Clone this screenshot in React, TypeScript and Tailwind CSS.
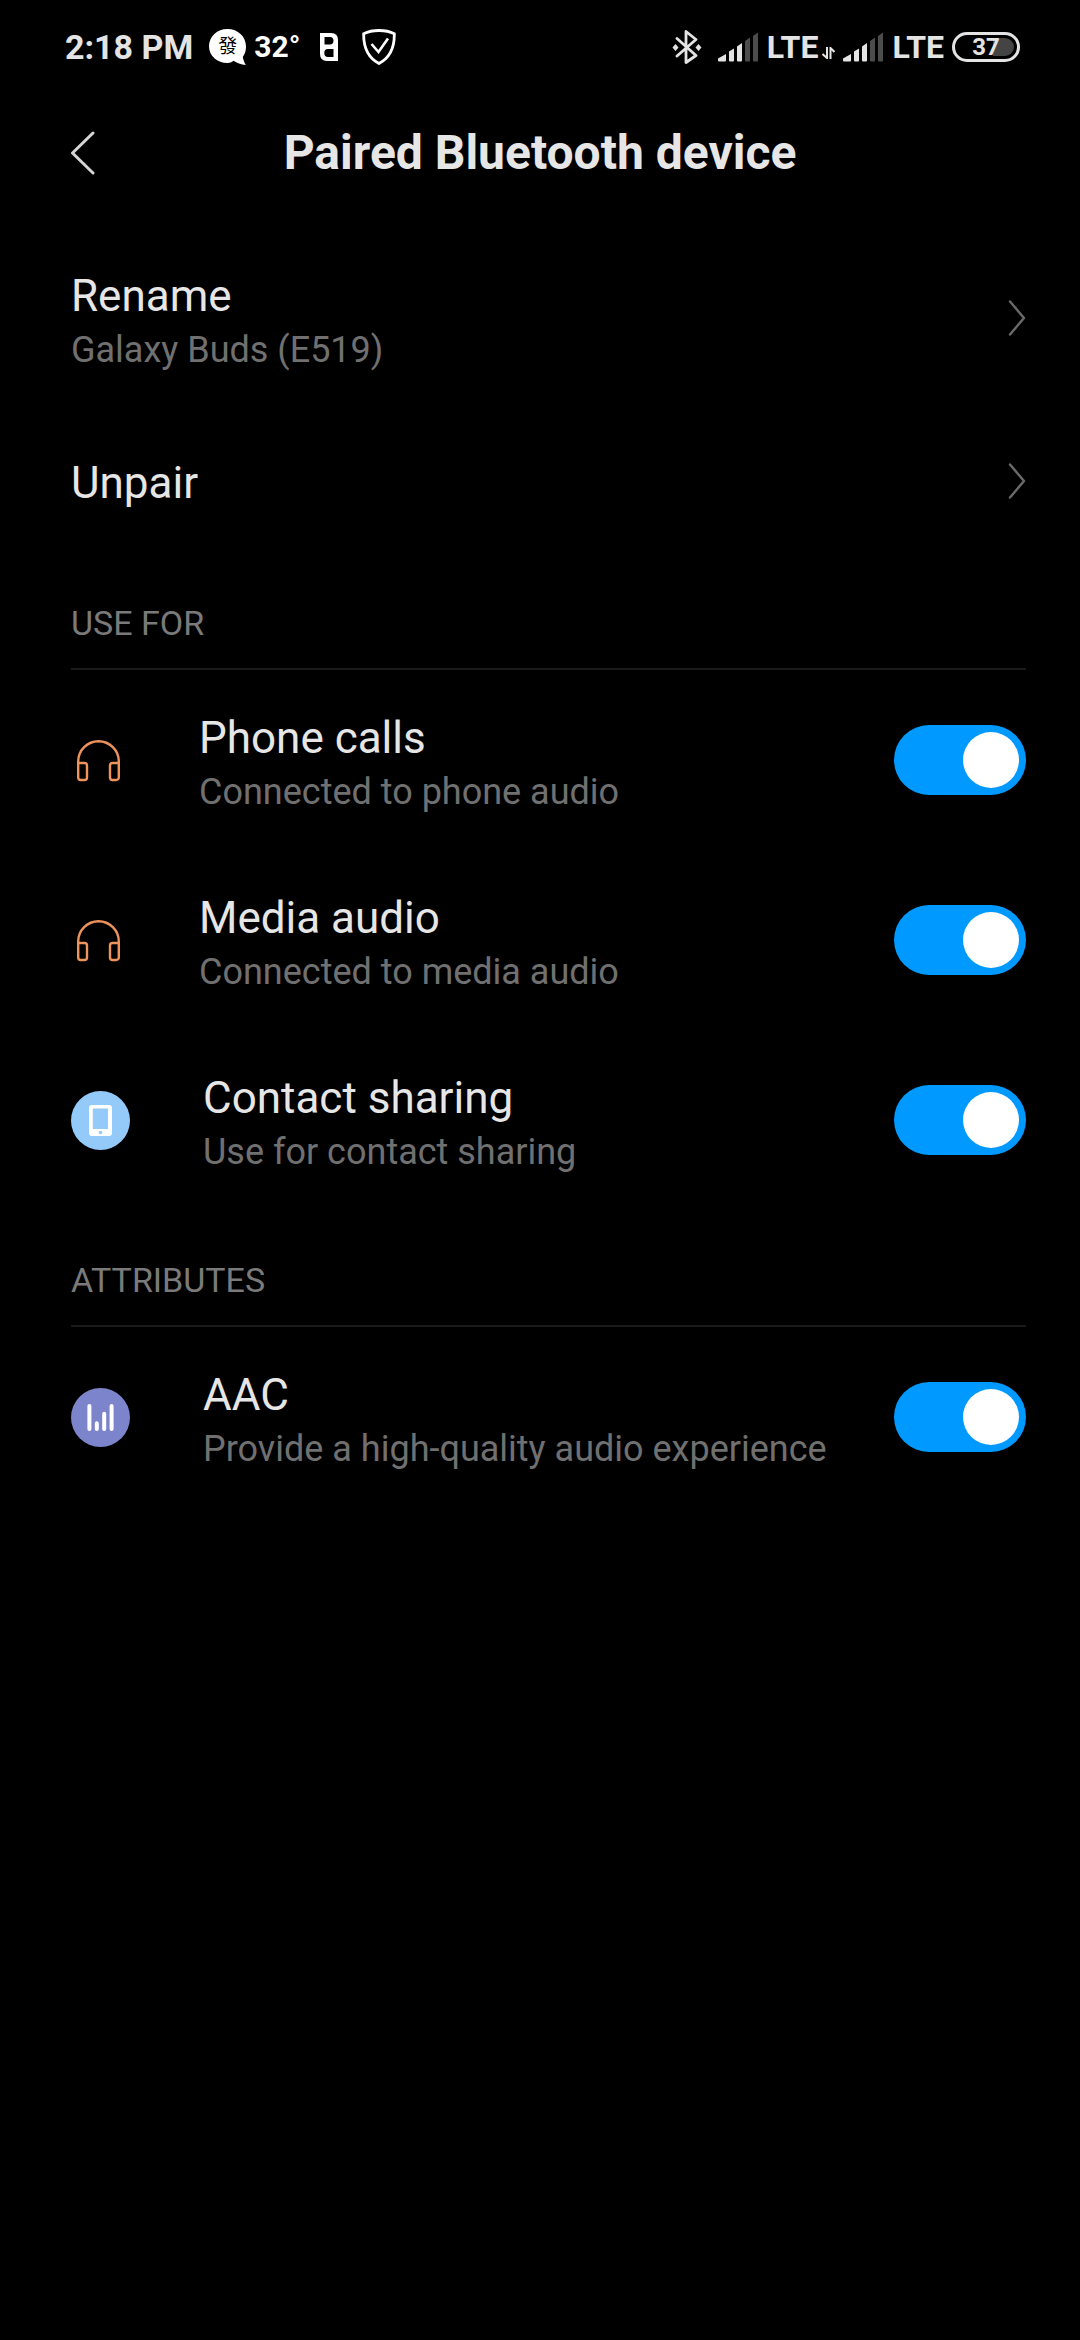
import type { ReactNode } from "react";

function ChevronRight() {
  return (
    <svg width="18" height="36" viewBox="0 0 18 36" fill="none" className="shrink-0" aria-hidden="true">
      <path d="M2 1.5L16 18L2 34.5" stroke="#6a6a6a" strokeWidth="2.4" strokeLinecap="round" strokeLinejoin="round" />
    </svg>
  );
}

function HeadphonesIcon() {
  return (
    <svg width="55" height="60" viewBox="0 0 55 60" fill="none" stroke="#ef935c" strokeWidth="2.4" className="shrink-0" aria-hidden="true">
      <path d="M7.2 33V31.5a20.3 20.3 0 0 1 40.6 0V33" />
      <path d="M7.2 33h6.3a2.5 2.500 0 0 1 2.500 2.500v12a2.500 2.500 0 0 1-2.500 2.500H9.700a2.500 2.500 0 0 1-2.500-2.500z" />
      <path d="M47.800 33h-6.300a2.500 2.500 0 0 0-2.500 2.500v12a2.500 2.500 0 0 0 2.500 2.500h3.800a2.500 2.500 0 0 0 2.500-2.500z" />
    </svg>
  );
}

function ContactIcon() {
  return (
    <svg width="59" height="59" viewBox="0 0 59 59" className="shrink-0" aria-hidden="true">
      <circle cx="29.5" cy="29.5" r="29.5" fill="#93cafa" />
      <rect x="18" y="14" width="23" height="31" rx="3" fill="#fff" />
      <rect x="21.8" y="17.5" width="15.2" height="20.5" fill="#93cafa" />
      <circle cx="29.5" cy="41.5" r="1.8" fill="#93cafa" />
    </svg>
  );
}

function EqualizerIcon() {
  return (
    <svg width="59" height="59" viewBox="0 0 59 59" className="shrink-0" aria-hidden="true">
      <circle cx="29.5" cy="29.5" r="29.5" fill="#7c84cb" />
      <g stroke="#fff" strokeWidth="4" strokeLinecap="round">
        <path d="M18.4 18v23M25.8 35.2V41M33.2 25.8V41M40.6 18v23" />
      </g>
    </svg>
  );
}

function SignalIcon() {
  return (
    <svg width="41" height="30" viewBox="0 0 41 30" aria-hidden="true">
      <g fill="#e4e4e4">
        <path d="M0 26.5L8 22v6.5a1 1 0 0 1-1 1H1a1 1 0 0 1-1-1z" />
        <path d="M11 19.5L16 16.5v12a1 1 0 0 1-1 1h-3a1 1 0 0 1-1-1z" />
        <path d="M19 14.5L24 11v17.5a1 1 0 0 1-1 1h-3a1 1 0 0 1-1-1z" />
      </g>
      <g fill="#4c4c4c">
        <path d="M27 9L32 5.5v23a1 1 0 0 1-1 1h-3a1 1 0 0 1-1-1z" />
        <path d="M35 4L40 .5v28a1 1 0 0 1-1 1h-3a1 1 0 0 1-1-1z" />
      </g>
    </svg>
  );
}

function StatusBar() {
  return (
    <div className="flex h-[78px] items-center justify-between pt-4 pl-[65px] pr-[60px]">
      <div className="flex items-center">
        <span className="text-[34px] leading-10 font-bold text-[#e4e4e4]">2:18 PM</span>
        <span className="relative ml-4 flex h-9 w-[37px] justify-center">
          <svg width="37" height="36" viewBox="0 0 37 36" className="absolute inset-0" aria-hidden="true">
            <path d="M18.5 0C28.8 0 37 7.5 37 17.5c0 4.5-1.2 7.800-3.200 10.500.6 3 1.600 5.600 3 8-5-.500-9-2-12.300-4.200C22.700 33.500 20.600 34 18.500 34 8.200 34 0 27 0 17.200S8.200 0 18.500 0z" fill="#fff" />
          </svg>
          <span className="relative font-['Noto_Sans_CJK_TC',sans-serif] text-[19px] leading-8 text-black">發</span>
        </span>
        <span className="ml-2 text-[30px] leading-10 font-bold text-white">32°</span>
        <svg width="18" height="28" viewBox="0 0 18 28" className="ml-5" aria-hidden="true">
          <path
            fill="#fff"
            fillRule="evenodd"
            d="M0 0h11q7 0 7 7v21H7q-7 0-7-7zM4.500 4v7.500H10q3.500 0 3.500-3.700T10 4zM13.500 16H8q-3.700 0-3.700 4T8 24h5.500z"
          />
        </svg>
        <svg width="34" height="36" viewBox="0 0 34 36" fill="none" stroke="#fff" className="ml-6" aria-hidden="true">
          <path d="M17 1.500c5.500 0 10.500.8 15.300 3.200C32.600 18 29 28 17 34.500 5 28 1.400 18 1.700 4.700 6.500 2.300 11.500 1.500 17 1.500z" strokeWidth="2.8" />
          <path d="M9.500 15l7 8L26 9.500" strokeWidth="2.6" />
        </svg>
      </div>

      <div className="flex items-center">
        <svg width="30" height="34" viewBox="0 0 30 34" fill="none" stroke="#e4e4e4" aria-hidden="true">
          <path d="M5 8.500L24 25.500L14 32.500V1.500L24 9.500L5 26" strokeWidth="2.8" strokeLinejoin="round" strokeLinecap="round" />
          <path d="M3.500 14l3 3.500-3 3.500-3-3.500zM26.500 14l3 3.500-3 3.500-3-3.500z" fill="#e4e4e4" stroke="none" />
        </svg>
        <div className="ml-4 flex items-center gap-2">
          <SignalIcon />
          <span className="text-[32px] leading-10 font-bold text-[#e4e4e4]">LTE</span>
        </div>
        <svg width="13" height="12" viewBox="0 0 13 12" className="mt-3 ml-1" fill="none" stroke="#e4e4e4" strokeWidth="2" aria-hidden="true">
          <path d="M5 0v11L.5 7M8.500 12V1L12.500 5" />
        </svg>
        <div className="ml-2 flex items-center gap-2">
          <SignalIcon />
          <span className="text-[32px] leading-10 font-bold text-[#e4e4e4]">LTE</span>
        </div>
        <div className="relative ml-2 h-[30px] w-[68px] rounded-full border-3 border-[#e4e4e4] p-[3px]">
          <div className="flex h-full justify-end overflow-hidden rounded-full">
            <div className="w-[37%] bg-[#444444]" />
          </div>
          <span className="absolute inset-0 text-center text-[24px] leading-6 font-bold text-[#e4e4e4]">37</span>
        </div>
      </div>
    </div>
  );
}

function RowText({ title, summary }: { title: string; summary?: string }) {
  return (
    <span className="flex min-w-0 flex-1 flex-col gap-1 pt-1 text-left">
      <span className="text-[44px] leading-14 text-[#e6e6e6]">{title}</span>
      {summary && <span className="text-[36px] leading-11 text-[#707070]">{summary}</span>}
    </span>
  );
}

function SectionHeader({ children }: { children: ReactNode }) {
  return (
    <h2 className="border-b-2 border-[#1b1b1b] pt-[50px] pb-[25px] text-[34px] leading-10 text-[#7a7a7a]">{children}</h2>
  );
}

type ToggleProps = { id: string; title: string; summary: string; icon: ReactNode };

function ToggleRow({ id, title, summary, icon }: ToggleProps) {
  return (
    <label htmlFor={id} className="flex min-h-[180px] items-center gap-[73px]">
      {icon}
      <RowText title={title} summary={summary} />
      <input
        id={id}
        type="checkbox"
        role="switch"
        defaultChecked
        className="-ml-10 flex h-[70px] w-[132px] shrink-0 appearance-none rounded-full bg-[#333333] p-[7px] before:size-14 before:rounded-full before:bg-white before:content-[''] checked:justify-end checked:bg-[#0099ff]"
      />
    </label>
  );
}

export default function App() {
  const profiles = [
    { id: "phone", title: "Phone calls", summary: "Connected to phone audio", icon: <HeadphonesIcon /> },
    { id: "media", title: "Media audio", summary: "Connected to media audio", icon: <HeadphonesIcon /> },
    { id: "contacts", title: "Contact sharing", summary: "Use for contact sharing", icon: <ContactIcon /> },
  ];

  return (
    <div className="min-h-screen bg-black font-[Roboto,sans-serif]">
      <StatusBar />

      <header className="grid h-[150px] grid-cols-[1fr_auto_1fr] items-center px-[70px]">
        <button type="button" aria-label="Back" className="justify-self-start">
          <svg width="26" height="44" viewBox="0 0 26 44" fill="none" className="block" aria-hidden="true">
            <path d="M23 2L2.5 22L23 42" stroke="#d6d6d6" strokeWidth="3" strokeLinecap="round" strokeLinejoin="round" />
          </svg>
        </button>
        <h1 className="text-[48px] leading-14 font-bold text-[#e6e6e6]">Paired Bluetooth device</h1>
      </header>

      <main className="pr-[54px] pl-[71px]">
        <button type="button" className="flex min-h-[180px] w-full items-center">
          <RowText title="Rename" summary="Galaxy Buds (E519)" />
          <ChevronRight />
        </button>
        <button type="button" className="flex min-h-[145px] w-full items-center">
          <RowText title="Unpair" />
          <ChevronRight />
        </button>

        <section>
          <SectionHeader>USE FOR</SectionHeader>
          {profiles.map((profile) => (
            <ToggleRow key={profile.id} {...profile} />
          ))}
        </section>

        <section>
          <SectionHeader>ATTRIBUTES</SectionHeader>
          <ToggleRow id="aac" title="AAC" summary="Provide a high-quality audio experience" icon={<EqualizerIcon />} />
        </section>
      </main>
    </div>
  );
}
